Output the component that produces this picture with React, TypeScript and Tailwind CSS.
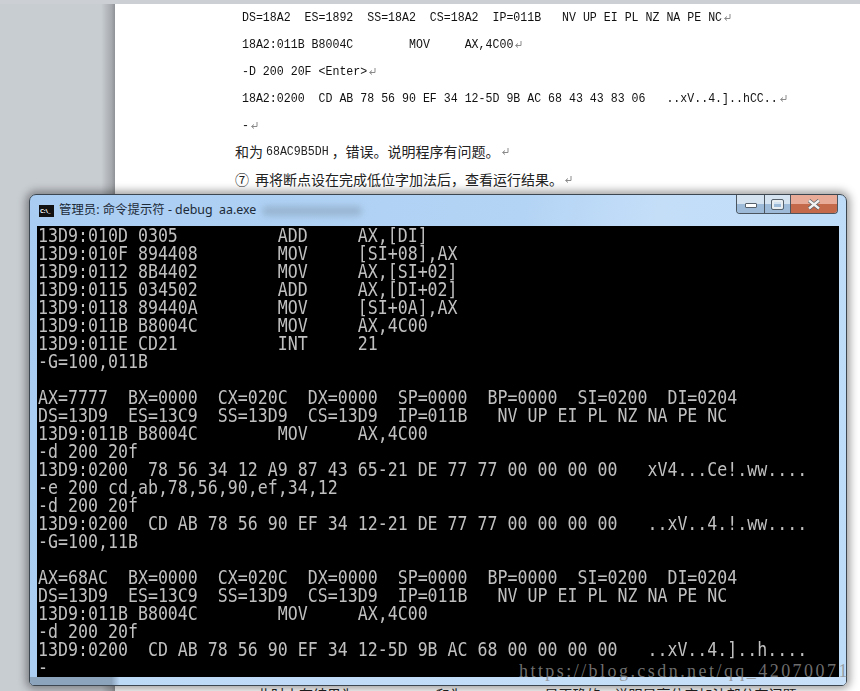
const lines = [
  "13D9:010D 0305          ADD     AX,[DI]",
  "13D9:010F 894408        MOV     [SI+08],AX",
  "13D9:0112 8B4402        MOV     AX,[SI+02]",
  "13D9:0115 034502        ADD     AX,[DI+02]",
  "13D9:0118 89440A        MOV     [SI+0A],AX",
  "13D9:011B B8004C        MOV     AX,4C00",
  "13D9:011E CD21          INT     21",
  "-G=100,011B",
  "",
  "AX=7777  BX=0000  CX=020C  DX=0000  SP=0000  BP=0000  SI=0200  DI=0204",
  "DS=13D9  ES=13C9  SS=13D9  CS=13D9  IP=011B   NV UP EI PL NZ NA PE NC",
  "13D9:011B B8004C        MOV     AX,4C00",
  "-d 200 20f",
  "13D9:0200  78 56 34 12 A9 87 43 65-21 DE 77 77 00 00 00 00   xV4...Ce!.ww....",
  "-e 200 cd,ab,78,56,90,ef,34,12",
  "-d 200 20f",
  "13D9:0200  CD AB 78 56 90 EF 34 12-21 DE 77 77 00 00 00 00   ..xV..4.!.ww....",
  "-G=100,11B",
  "",
  "AX=68AC  BX=0000  CX=020C  DX=0000  SP=0000  BP=0000  SI=0200  DI=0204",
  "DS=13D9  ES=13C9  SS=13D9  CS=13D9  IP=011B   NV UP EI PL NZ NA PE NC",
  "13D9:011B B8004C        MOV     AX,4C00",
  "-d 200 20f",
  "13D9:0200  CD AB 78 56 90 EF 34 12-5D 9B AC 68 00 00 00 00   ..xV..4.]..h....",
  "-",
];

const docLines = [
  "DS=18A2  ES=1892  SS=18A2  CS=18A2  IP=011B   NV UP EI PL NZ NA PE NC",
  "18A2:011B B8004C        MOV     AX,4C00",
  "-D 200 20F <Enter>",
  "18A2:0200  CD AB 78 56 90 EF 34 12-5D 9B AC 68 43 43 83 06   ..xV..4.]..hCC..",
  "-",
];

function ParaMark() {
  return (
    <svg width="9" height="9" viewBox="0 0 9 9" className="ml-px inline-block shrink-0">
      <path d="M7 1v4.5H2M4 3.5L1.5 5.5 4 7.5" fill="none" stroke="#8a8a8a" strokeWidth="1" />
    </svg>
  );
}

function DocLine({ text }: { text: string }) {
  return (
    <div className="flex h-[27px] items-center pl-[127px] font-['Liberation_Mono',monospace] text-[11.6px] text-[#111]">
      <span className="inline-block scale-y-[1.15] whitespace-pre">{text}</span>
      <ParaMark />
    </div>
  );
}

function CmdWindow() {
  return (
    <div className="absolute left-[29px] top-[194px] flex h-[492px] w-[818px] flex-col rounded-t-[7px] rounded-b-[5px] border border-[#3c4650] bg-[linear-gradient(100deg,#a9cdf2_0%,#b4d4f5_55%,#c4def8_70%,#bcdcf8_100%)] shadow-[0_0_9px_3px_rgba(0,0,0,0.38)]">
      <div className="relative flex h-[31px] shrink-0 items-center pl-[9px]">
        <div className="flex h-[12px] w-[15px] items-center bg-[#111] pl-px text-[6px] font-bold leading-none text-white">
          C:\_
        </div>
        <span className="ml-[5px] whitespace-pre font-['Noto_Sans','Noto_Sans_CJK_SC',sans-serif] text-[12.4px] text-[#1c2a38]">
          管理员: 命令提示符 - debug  aa.exe
        </span>
        <div className="absolute left-[232px] top-[11px] h-[10px] w-[100px] rounded-full bg-[#8aa4bd] opacity-60 blur-[3px]" />
        <div className="absolute right-[8px] top-0 flex h-[19px] overflow-hidden rounded-b-[4px] border border-t-0 border-[#4a5560]">
          <div className="flex w-[28px] items-center justify-center border-r border-[#4a5560] bg-[linear-gradient(#d5e3f0_50%,#9dbad8_50%)]">
            <div className="mt-[3px] h-[5px] w-[12px] rounded-[1px] border border-[#56616c] bg-white" />
          </div>
          <div className="flex w-[26px] items-center justify-center border-r border-[#4a5560] bg-[linear-gradient(#d5e3f0_50%,#9dbad8_50%)]">
            <div className="h-[9px] w-[11px] rounded-[1px] border-2 border-[#e8edf2] outline outline-1 outline-[#56616c]" />
          </div>
          <div className="flex w-[46px] items-center justify-center bg-[linear-gradient(#e7ab98_50%,#c4694a_50%)]">
            <svg width="14" height="11" viewBox="0 0 14 11">
              <path d="M2 1.5l10 8M12 1.5l-10 8" stroke="#4e5860" strokeWidth="3.6" />
              <path d="M2 1.5l10 8M12 1.5l-10 8" stroke="#f2f2f2" strokeWidth="2.4" />
            </svg>
          </div>
        </div>
      </div>
      <div className="mx-[7px] h-[451px] shrink-0 overflow-hidden bg-black font-['DejaVu_Sans_Mono',monospace] text-[16.6px] leading-[18px] text-[#c0c0c0]">
        {lines.map((line, i) => (
          <div key={i} className="h-[18px] origin-top scale-y-[1.15] whitespace-pre pl-px">
            {line}
          </div>
        ))}
      </div>
      <div className="flex-1 rounded-b-[4px] bg-[linear-gradient(90deg,#8da4bd_0%,#8da4bd_10%,#bcd9f6_11%,#c9e1f9_100%)]" />
    </div>
  );
}

export default function App() {
  return (
    <div className="relative flex h-[691px] w-[860px] flex-col overflow-hidden bg-[#c9ced3]">
      <div className="h-[4px] shrink-0 bg-[#ccd0d4]" />
      <div className="flex flex-1">
        <div className="w-[115px] shrink-0 bg-[linear-gradient(90deg,#c8cdd2_0%,#c8cdd2_88%,#a6a9ad_97%,#8f9296_100%)]" />
        <div className="flex-1 bg-white">
          <DocLine text={docLines[0]} />
          <DocLine text={docLines[1]} />
          <DocLine text={docLines[2]} />
          <DocLine text={docLines[3]} />
          <DocLine text={docLines[4]} />
          <div className="flex h-[28px] items-center pb-[3px] pl-[120px] font-['Noto_Sans_CJK_SC',sans-serif] text-[14px] text-[#222]">
            和为
            <span className="mx-[3px] inline-block scale-y-[1.15] font-['Liberation_Mono',monospace] text-[11.6px]">68AC9B5DH</span>
            ，错误。说明程序有问题。
            <ParaMark />
          </div>
          <div className="flex h-[28px] items-center pb-[3px] pl-[120px] font-['Noto_Sans_CJK_SC',sans-serif] text-[14px] text-[#222]">
            <span className="mr-[6px]">⑦</span>再将断点设在完成低位字加法后，查看运行结果。
            <ParaMark />
          </div>
        </div>
      </div>
      <div className="absolute left-[257px] top-[687px] flex items-baseline whitespace-pre font-['Noto_Sans_CJK_SC',sans-serif] text-[14px] leading-[14px] text-[#222]">
        此时内存结果为
        <span className="mx-[1px] font-['Liberation_Mono',monospace] text-[12px]">68AC9B5DH</span>
        ，和为
        <span className="mx-[1px] font-['Liberation_Mono',monospace] text-[12px]">68AC9B5DH</span>
        ，是正确的。说明是高位字加法部分有问题。
      </div>
      <CmdWindow />
      <div className="absolute left-[519px] top-[661px] whitespace-pre font-['Liberation_Serif',serif] text-[18px] leading-[20px] tracking-[2.45px] text-[#8c8c8c]/80">
        https://blog.csdn.net/qq_42070071
      </div>
    </div>
  );
}
